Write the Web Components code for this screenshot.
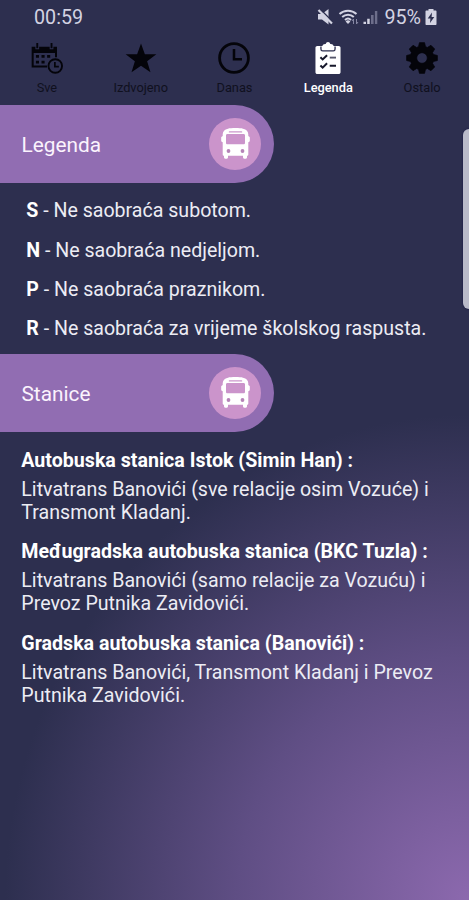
<!DOCTYPE html>
<html lang="bs">
<head>
<meta charset="UTF-8">
<title>Red vožnje</title>
<style>
  body {
    margin: 0;
    font-family: Roboto, "Liberation Sans", sans-serif;
    color: #ececf4;
  }
</style>
</head>
<body>
<timetable-app>
  <status-bar slot="status" time="00:59" battery="95%"></status-bar>
  <tab-bar slot="tabs">
    <tab-item icon="calendar" label="Sve"></tab-item>
    <tab-item icon="star" label="Izdvojeno"></tab-item>
    <tab-item icon="clock" label="Danas"></tab-item>
    <tab-item icon="clipboard" label="Legenda" active></tab-item>
    <tab-item icon="gear" label="Ostalo"></tab-item>
  </tab-bar>
  <section-header>Legenda</section-header>
  <legend-list>
    <legend-row code="S">Ne saobraća subotom.</legend-row>
    <legend-row code="N">Ne saobraća nedjeljom.</legend-row>
    <legend-row code="P">Ne saobraća praznikom.</legend-row>
    <legend-row code="R">Ne saobraća za vrijeme školskog raspusta.</legend-row>
  </legend-list>
  <section-header>Stanice</section-header>
  <station-list>
    <station-info name="Autobuska stanica Istok (Simin Han) :">Litvatrans Banovići (sve relacije osim Vozuće) i<br>Transmont Kladanj.</station-info>
    <station-info name="Međugradska autobuska stanica (BKC Tuzla) :">Litvatrans Banovići (samo relacije za Vozuću) i<br>Prevoz Putnika Zavidovići.</station-info>
    <station-info name="Gradska autobuska stanica (Banovići) :">Litvatrans Banovići, Transmont Kladanj i Prevoz<br>Putnika Zavidovići.</station-info>
  </station-list>
  <edge-handle slot="overlay"></edge-handle>
</timetable-app>

<script>
const tabIcons = {
  calendar: `
    <path d="M.5 3.500h19v8h-1.500V8.300H2v9.400h10v1.500H.5z"/>
    <path d="M3.300 2.800h2.800v2.600H3.300zM14 2.800h2.800v2.600H14z" fill="#2d2f4f"/>
    <path d="M4 .8h1.400v3.800H4zM14.700.8h1.400v3.800h-1.400z"/>
    <path d="M3.700 9.700H6v2.100H3.700zm4.200 0h2.300v2.100H7.900zm4.200 0h2.300v2.100h-2.300zM3.700 14H6v2.100H3.700zm4.200 0h2.300v2.100H7.900z"/>
    <circle cx="18.200" cy="18" r="5.100" fill="none" stroke="currentColor" stroke-width="1.400"/>
    <path d="M17.900 15v3.500h3" fill="none" stroke="currentColor" stroke-width="1.300"/>`,
  star: `<path d="M12 1.200l2.900 8h8.600l-6.900 5.200 2.500 8.300-7.100-4.800-7.100 4.800 2.500-8.300L.5 9.200h8.600z"/>`,
  clock: `
    <circle cx="12" cy="12" r="10.800" fill="none" stroke="currentColor" stroke-width="2.100"/>
    <path d="M12 5.200v7.700h6" fill="none" stroke="currentColor" stroke-width="1.900"/>`,
  clipboard: `
    <path d="M4 3h3.800c.2-.9 1-1.500 2-1.500h.5C10.500.6 11.100 0 12 0s1.500.6 1.700 1.500h.5c1 0 1.800.6 2 1.500H20c.8 0 1.400.6 1.400 1.400v18.200c0 .8-.6 1.400-1.400 1.400H4c-.8 0-1.400-.6-1.400-1.400V4.400C2.600 3.600 3.200 3 4 3z"/>
    <path d="M6.700 3.400v1.800c0 .8.500 1.400 1.300 1.400h8c.8 0 1.300-.6 1.300-1.400V3.400" fill="none" stroke="#2d2f4f" stroke-width="1"/>
    <path d="M6.300 11.500l1.700 1.600 3.300-3.200M6.300 17.600l1.700 1.600 3.300-3.200M13.300 17.800h4.700" fill="none" stroke="#17182b" stroke-width="1.500"/>
    <path d="M13.300 11.700h4.700" fill="none" stroke="#55566b" stroke-width="1.400"/>`,
  gear: `<path fill-rule="evenodd" stroke="currentColor" stroke-width=".6" stroke-linejoin="round" d="M10.100.5h3.800l.7 3 1.500.6 2.600-1.600 2.800 2.800-1.600 2.600.6 1.500 3 .7v3.800l-3 .7-.6 1.500 1.600 2.600-2.800 2.800-2.600-1.600-1.500.6-.7 3h-3.800l-.7-3-1.500-.6-2.600 1.600-2.800-2.800 1.600-2.600-.6-1.500-3-.7v-3.800l3-.7.6-1.500-1.600-2.600 2.800-2.800 2.600 1.600 1.500-.6zM12 8a4 4 0 1 0 0 8 4 4 0 0 0 0-8z"/>`
};

class TimetableApp extends HTMLElement {
  constructor() {
    super();
    this.attachShadow({ mode: 'open' }).innerHTML = `
      <style>
        :host {
          display: flex;
          flex-direction: column;
          position: relative;
          height: 900px;
          overflow: hidden;
          background: radial-gradient(464px 485px at 100% 100%, #8c69ae 0%, #5f4e84 50%, #2d2f4f 100%);
        }
      </style>
      <slot name="status"></slot>
      <slot name="tabs"></slot>
      <slot></slot>
      <slot name="overlay"></slot>
    `;
  }
}

class StatusBar extends HTMLElement {
  connectedCallback() {
    this.attachShadow({ mode: 'open' }).innerHTML = `
      <style>
        :host {
          display: flex;
          justify-content: space-between;
          align-items: center;
          height: 34px;
          box-sizing: border-box;
          padding: 0 32px 0 34px;
          color: #d3d3e2;
          font-size: 19.700px;
        }
        .right {
          display: flex;
          align-items: center;
        }
        svg {
          display: block;
          fill: currentColor;
        }
        .battery-text {
          margin: 0 4px 0 5px;
        }
      </style>
      <span>${this.getAttribute('time')}</span>
      <div class="right">
        <svg width="62" height="18" viewBox="0 0 62 18">
          <path d="M1 6h4l6.500-5v15.500L5 11.500H1z"/>
          <path d="M3 1l13 13" stroke="#2d2f4f" stroke-width="1.500"/>
          <path d="M1.500 2L15 15.500" stroke="currentColor" stroke-width="2.200"/>
          <path d="M22.500 6a12.500 12.500 0 0 1 17 0M25.200 9a8.500 8.500 0 0 1 11.600 0M28 11.900a4.500 4.500 0 0 1 6 0" fill="none" stroke="currentColor" stroke-width="2"/>
          <path d="M28.600 13.400a3.400 3.400 0 0 1 4.800 0L31 16z"/>
          <path d="M36.500 16v-5l-1.500 2M39.500 11v5l1.500-2" fill="none" stroke="#8586a3" stroke-width="1"/>
          <path d="M46.500 13.800H49V16h-2.500zm3.700-3h2.500V16h-2.500z"/>
          <path d="M54 7h2.600v9H54zm3.900-4h2.400v13h-2.400z" fill="#6d6e8b"/>
        </svg>
        <span class="battery-text">${this.getAttribute('battery')}</span>
        <svg width="12" height="16" viewBox="0 0 12 16">
          <path d="M3.500 0h5v1.500h2c.6 0 1 .4 1 1V15c0 .6-.4 1-1 1h-9c-.6 0-1-.4-1-1V2.500c0-.6.4-1 1-1h2z"/>
          <path d="M7 3.500L2.700 9.500h2.700L5 14l4.300-6H6.600z" fill="#2d2f4f"/>
        </svg>
      </div>
    `;
  }
}

class TabBar extends HTMLElement {
  constructor() {
    super();
    this.attachShadow({ mode: 'open' }).innerHTML = `
      <style>
        :host {
          display: grid;
          grid-template-columns: repeat(5, 1fr);
          height: 71px;
        }
      </style>
      <slot></slot>
    `;
  }
}

class TabItem extends HTMLElement {
  connectedCallback() {
    this.attachShadow({ mode: 'open' }).innerHTML = `
      <style>
        :host {
          display: flex;
          flex-direction: column;
          align-items: center;
          padding-top: 8px;
          gap: 6px;
          color: #04040a;
        }
        :host([active]) {
          color: #fff;
        }
        svg {
          width: 32px;
          height: 32px;
          fill: currentColor;
        }
        span {
          font-size: 12.800px;
          line-height: 15px;
          opacity: 0.7;
        }
        :host([active]) span {
          font-weight: 500;
          opacity: 1;
        }
      </style>
      <svg viewBox="0 0 24 24">${tabIcons[this.getAttribute('icon')]}</svg>
      <span>${this.getAttribute('label')}</span>
    `;
  }
}

class SectionHeader extends HTMLElement {
  constructor() {
    super();
    this.attachShadow({ mode: 'open' }).innerHTML = `
      <style>
        :host {
          display: flex;
          flex: none;
          justify-content: space-between;
          align-items: center;
          box-sizing: border-box;
          width: 274px;
          height: 78px;
          padding: 0 13px 0 21.500px;
          border-radius: 0 39px 39px 0;
          background: #916db2;
          color: #fbf3fd;
          font-size: 20.800px;
        }
        .label {
          padding-top: 2px;
        }
        .badge {
          display: flex;
          align-items: center;
          justify-content: center;
          width: 52px;
          height: 52px;
          border-radius: 50%;
          background: #cb94cb;
        }
      </style>
      <span class="label"><slot></slot></span>
      <div class="badge">
        <svg width="29" height="32" viewBox="0 0 29 32">
          <path fill="#fff" fill-rule="evenodd" d="M7 .7C9.500-.1 19.500-.1 22 .7c3.500.8 5.300 2.600 5.300 5.800v1.700c.7 0 1.500.6 1.500 1.400v3.200c0 .8-.8 1.400-1.500 1.400v12.300c0 .8-.5 1.300-1.300 1.300v1.400c0 2-4 2-4 0v-1.400H7v1.400c0 2-4 2-4 0v-1.400c-.8 0-1.300-.5-1.300-1.300V14.200C1 14.200.2 13.600.2 12.800V9.600C.2 8.800 1 8.200 1.700 8.200V6.500C1.700 3.300 3.500 1.500 7 .7zM8.500 3.300c-1 0-1 1.300 0 1.300h12c1 0 1-1.300 0-1.300zM6.500 6.100c-.9 0-1.500.6-1.500 1.400v7.400c0 .8.600 1.400 1.500 1.400h16c.9 0 1.500-.6 1.500-1.400V7.500c0-.8-.6-1.400-1.500-1.400z"/>
          <g fill="#b583b8"><circle cx="7.500" cy="23" r="1.900"/><circle cx="21.500" cy="23" r="1.900"/></g>
        </svg>
      </div>
    `;
  }
}

class LegendList extends HTMLElement {
  constructor() {
    super();
    this.attachShadow({ mode: 'open' }).innerHTML = `
      <style>
        :host {
          display: flex;
          flex-direction: column;
          gap: 16.300px;
          padding: 16.300px 0 13.800px 26.300px;
        }
      </style>
      <slot></slot>
    `;
  }
}

class LegendRow extends HTMLElement {
  connectedCallback() {
    this.attachShadow({ mode: 'open' }).innerHTML = `
      <style>
        :host {
          display: block;
          font-size: 19.580px;
          line-height: 23px;
          white-space: nowrap;
        }
        b {
          color: #fff;
        }
      </style>
      <b>${this.getAttribute('code')}</b> - <slot></slot>
    `;
  }
}

class StationList extends HTMLElement {
  constructor() {
    super();
    this.attachShadow({ mode: 'open' }).innerHTML = `
      <style>
        :host {
          display: flex;
          flex-direction: column;
          gap: 16.500px;
          padding: 17px 0 0 21.300px;
        }
      </style>
      <slot></slot>
    `;
  }
}

class StationInfo extends HTMLElement {
  connectedCallback() {
    this.attachShadow({ mode: 'open' }).innerHTML = `
      <style>
        :host {
          display: block;
          font-size: 19.620px;
          line-height: 23px;
          white-space: nowrap;
        }
        .name {
          margin-bottom: 6px;
          color: #fff;
          font-weight: 700;
        }
      </style>
      <div class="name">${this.getAttribute('name')}</div>
      <div><slot></slot></div>
    `;
  }
}

// Pull-out panel handle on the right screen edge
class EdgeHandle extends HTMLElement {
  constructor() {
    super();
    this.attachShadow({ mode: 'open' }).innerHTML = `
      <style>
        :host {
          position: absolute;
          top: 129px;
          right: 0;
          width: 6px;
          height: 180px;
          border-radius: 6px 0 0 6px;
          background: #b9bac9;
          box-shadow: 0 0 1px 1px #25264c;
        }
      </style>
    `;
  }
}

customElements.define('timetable-app', TimetableApp);
customElements.define('status-bar', StatusBar);
customElements.define('tab-bar', TabBar);
customElements.define('tab-item', TabItem);
customElements.define('section-header', SectionHeader);
customElements.define('legend-list', LegendList);
customElements.define('legend-row', LegendRow);
customElements.define('station-list', StationList);
customElements.define('station-info', StationInfo);
customElements.define('edge-handle', EdgeHandle);
</script>
</body>
</html>
